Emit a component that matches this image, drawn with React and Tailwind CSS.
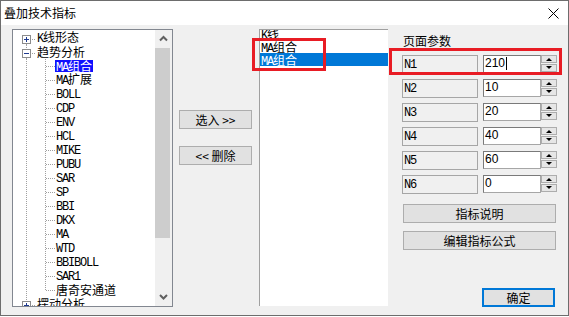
import React from "react";

const LAT = /^[A-Za-z0-9]+$/;
function Mixed({ s }) {
  return s
    .split(/([A-Za-z0-9]+)/)
    .filter(Boolean)
    .map((p, i) =>
      LAT.test(p) ? (
        <span key={i} className="font-['Liberation_Mono',monospace] tracking-[-1.2px]">
          {p}
        </span>
      ) : (
        <span key={i}>{p}</span>
      )
    );
}

const DOT = "#a0a0a0";

function RootCell({ first, box }) {
  return (
    <svg width="19" height="14" className="shrink-0 block">
      {!first && <line x1="9.5" y1="0" x2="9.5" y2="4" stroke={DOT} strokeDasharray="1 1" />}
      <line x1="9.5" y1="13" x2="9.5" y2="14" stroke={DOT} strokeDasharray="1 1" />
      <line x1="15" y1="8.5" x2="19" y2="8.5" stroke={DOT} strokeDasharray="1 1" />
      <rect x="5.5" y="4.5" width="8" height="8" fill="#fff" stroke="#8c8c8c" />
      <line x1="7" y1="8.5" x2="12" y2="8.5" stroke="#1f3b8f" />
      {box === "+" && <line x1="9.5" y1="6" x2="9.5" y2="11" stroke="#1f3b8f" />}
    </svg>
  );
}

function VCell() {
  return (
    <svg width="19" height="14" className="shrink-0 block">
      <line x1="9.5" y1="0" x2="9.5" y2="14" stroke={DOT} strokeDasharray="1 1" />
    </svg>
  );
}

function ChildCell({ last }) {
  return (
    <svg width="19" height="14" className="shrink-0 block">
      <line x1="9.5" y1="0" x2="9.5" y2={last ? 8 : 14} stroke={DOT} strokeDasharray="1 1" />
      <line x1="10" y1="7.5" x2="19" y2="7.5" stroke={DOT} strokeDasharray="1 1" />
    </svg>
  );
}

const children = [
  "MA组合",
  "MA扩展",
  "BOLL",
  "CDP",
  "ENV",
  "HCL",
  "MIKE",
  "PUBU",
  "SAR",
  "SP",
  "BBI",
  "DKX",
  "MA",
  "WTD",
  "BBIBOLL",
  "SAR1",
  "唐奇安通道",
];

function Chevron({ down }) {
  return (
    <svg width="15" height="17" className="block">
      <polyline
        points={down ? "4,7 7.5,10.5 11,7" : "4,10.5 7.5,7 11,10.5"}
        fill="none"
        stroke="#606060"
        strokeWidth="2"
      />
    </svg>
  );
}

function Tree() {
  return (
    <div className="w-[161px] h-[278px] border border-[#828790] bg-white flex shrink-0">
      <div className="flex-1 overflow-hidden pt-[1px] pl-[4px]">
        <div className="flex h-[14px] items-center">
          <RootCell first box="+" />
          <span className="ml-[1px] leading-[14px] whitespace-nowrap">
            <Mixed s="K线形态" />
          </span>
        </div>
        <div className="flex h-[14px] items-center">
          <RootCell box="-" />
          <span className="ml-[1px] leading-[14px] whitespace-nowrap">趋势分析</span>
        </div>
        {children.map((c, i) => (
          <div key={i} className="flex h-[14px] items-center">
            <VCell />
            <ChildCell last={i === children.length - 1} />
            {i === 0 ? (
              <span className="leading-[12px] h-[12px] whitespace-nowrap bg-[#1010ff] text-white px-[1px]">
                <Mixed s={c} />
              </span>
            ) : (
              <span className="ml-[1px] leading-[14px] whitespace-nowrap">
                <Mixed s={c} />
              </span>
            )}
          </div>
        ))}
        <div className="flex h-[14px] items-center">
          <RootCell box="+" />
          <span className="ml-[1px] leading-[14px] whitespace-nowrap">摆动分析</span>
        </div>
      </div>
      <div className="w-[17px] bg-[#f0f0f0] flex flex-col">
        <div className="h-[17px] flex items-center justify-center">
          <Chevron />
        </div>
        <div className="mt-[1px] h-[190px] w-[15px] bg-[#cdcdcd]" />
        <div className="flex-1" />
        <div className="h-[17px] flex items-center justify-center mb-[1px]">
          <Chevron down />
        </div>
      </div>
    </div>
  );
}

function Btn({ children, className = "" }) {
  return (
    <div
      className={
        "h-[19px] bg-[#e1e1e1] border border-[#adadad] flex items-center justify-center leading-[14px] " +
        className
      }
    >
      {children}
    </div>
  );
}

function Spinner() {
  return (
    <div className="w-[16px] h-[18px] flex flex-col gap-[1px] shrink-0">
      <div className="h-[8px] border border-[#adadad] bg-[#e6e6e6] flex items-center justify-center">
        <svg width="6" height="4" className="block">
          <polygon points="0,4 3,1 6,4" fill="#000" />
        </svg>
      </div>
      <div className="h-[8px] border border-[#adadad] bg-[#e6e6e6] flex items-center justify-center">
        <svg width="6" height="4" className="block">
          <polygon points="0,0 6,0 3,3" fill="#000" />
        </svg>
      </div>
    </div>
  );
}

const params = [
  ["N1", "210"],
  ["N2", "10"],
  ["N3", "20"],
  ["N4", "40"],
  ["N5", "60"],
  ["N6", "0"],
];

export default function App() {
  return (
    <div className="w-[569px] h-[317px] bg-white relative font-['Noto_Sans_CJK_SC',sans-serif] text-[12px] text-black">
      <div className="w-[569px] h-[316px] border border-[#6d6d6d] bg-[#f0f0f0] flex flex-col">
        <div className="h-[24px] bg-white flex items-center justify-between pl-[3px] pr-[9px] shrink-0">
          <span className="leading-[14px]">叠加技术指标</span>
          <svg width="11" height="11" className="block">
            <path d="M0.5 0.5 L10.5 10.5 M10.5 0.5 L0.5 10.5" stroke="#000" fill="none" />
          </svg>
        </div>
        <div className="flex pl-[11px] pt-[4px] flex-1">
          <Tree />
          <div className="w-[73px] ml-[6px] flex flex-col shrink-0">
            <Btn className="mt-[81px]">选入 &gt;&gt;</Btn>
            <Btn className="mt-[17px]">&lt;&lt; 删除</Btn>
          </div>
          <div className="w-[129px] h-[277px] ml-[7px] border-l border-t border-[#a0a0a0] bg-white overflow-hidden shrink-0">
            <div className="-mt-[3px]">
              <div className="h-[13px] leading-[13px] pl-[1px]">
                <Mixed s="K线" />
              </div>
              <div className="h-[13px] leading-[13px] pl-[1px]">
                <Mixed s="MA组合" />
              </div>
              <div className="h-[13px] leading-[13px] pl-[1px] bg-[#0078d7] text-white">
                <Mixed s="MA组合" />
              </div>
            </div>
          </div>
          <div className="ml-[14px] w-[155px] flex flex-col shrink-0">
            <div className="mt-[5px] h-[14px] leading-[14px] pl-[1px]">页面参数</div>
            <div className="mt-[7px] flex flex-col gap-[5px]">
              {params.map(([n, v], i) => (
                <div key={n} className="flex h-[19px]">
                  <div className="w-[76px] h-[19px] border border-[#a6a6a6] pl-[1px] leading-[14px] shrink-0">
                    <Mixed s={n} />
                  </div>
                  <div className="ml-[5px] w-[58px] h-[18px] bg-white border border-[#a6a6a6] border-t-[#7a7a7a] border-l-[#7a7a7a] pl-[1px] leading-[14px] font-['Liberation_Sans',sans-serif] flex items-start shrink-0">
                    <span>{v}</span>
                    {i === 0 && <span className="inline-block w-[1px] h-[13px] bg-black mt-[1px] ml-[1px]" />}
                  </div>
                  <Spinner />
                </div>
              ))}
            </div>
            <Btn className="mt-[10px] ml-[1px] w-[153px]">指标说明</Btn>
            <Btn className="mt-[8px] ml-[1px] w-[153px]">编辑指标公式</Btn>
            <div className="mt-[38px] ml-[80px] w-[73px] h-[19px] bg-[#e1e1e1] border-2 border-[#0078d7] flex items-center justify-center leading-[14px]">
              确定
            </div>
          </div>
        </div>
      </div>
      <div className="absolute left-[252px] top-[38px] w-[74px] h-[33px] border-[3px] border-[#e81c24]" />
      <div className="absolute left-[389px] top-[48px] w-[173px] h-[27px] border-[3px] border-[#e81c24]" />
    </div>
  );
}
